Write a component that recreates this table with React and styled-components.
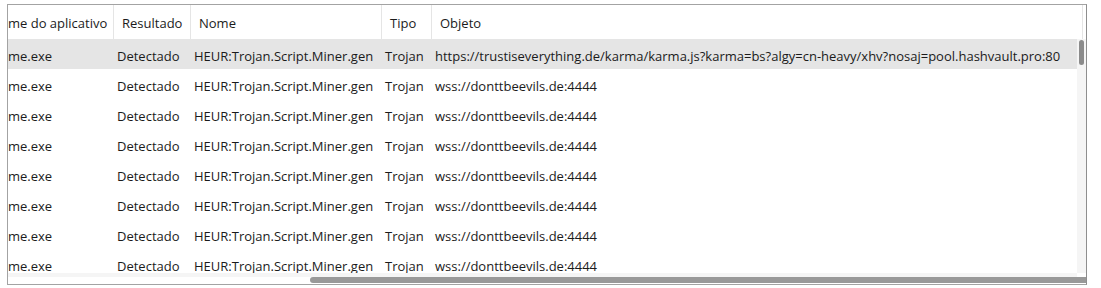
import React from 'react';
import styled, { createGlobalStyle } from 'styled-components';

const GlobalStyle = createGlobalStyle`
  html, body {
    margin: 0;
    padding: 0;
    background: #ffffff;
  }
  body {
    padding: 4px 14px 0 7px;
    font-family: "Open Sans", "Noto Sans", "Liberation Sans", sans-serif;
    font-size: 13px;
    color: #1b1b1b;
  }
`;

const columns = [
  { key: 'app', title: 'me do aplicativo', width: 106, first: true },
  { key: 'result', title: 'Resultado', width: 77 },
  { key: 'name', title: 'Nome', width: 191 },
  { key: 'type', title: 'Tipo', width: 50 },
  { key: 'object', title: 'Objeto', width: 700, last: true },
];

const rows = [
  {
    app: 'me.exe',
    result: 'Detectado',
    name: 'HEUR:Trojan.Script.Miner.gen',
    type: 'Trojan',
    object:
      'https://trustiseverything.de/karma/karma.js?karma=bs?algy=cn-heavy/xhv?nosaj=pool.hashvault.pro:80',
    selected: true,
  },
  ...Array.from({ length: 7 }, () => ({
    app: 'me.exe',
    result: 'Detectado',
    name: 'HEUR:Trojan.Script.Miner.gen',
    type: 'Trojan',
    object: 'wss://donttbeevils.de:4444',
  })),
];

const Frame = styled.div`
  width: 1078px;
  border: 1px solid #a3a3a3;
  border-right-color: #8e8e8e;
  display: flex;
  flex-direction: column;
  background: #ffffff;
`;

const Header = styled.div`
  display: flex;
  height: 34px;
  overflow: hidden;
  padding-right: 3px;
`;

const HeaderCell = styled.div`
  flex: ${(p) => (p.$last ? '1 1 0' : `0 0 ${p.$width}px`)};
  box-sizing: border-box;
  display: flex;
  align-items: center;
  padding: 1px 0 0 ${(p) => (p.$first ? 0 : 8)}px;
  border-right: 1px solid #e5e5e5;
  white-space: nowrap;
  overflow: hidden;
`;

const BodyArea = styled.div`
  display: flex;
  height: 234px;
`;

const Viewport = styled.div`
  flex: 1;
  overflow: hidden;
`;

const Row = styled.div`
  display: flex;
  height: 30px;
  background: ${(p) => (p.$selected ? '#e5e5e5' : 'transparent')};
`;

const Cell = styled.div`
  flex: 0 0 ${(p) => p.$width}px;
  box-sizing: border-box;
  display: flex;
  align-items: center;
  padding: 3px 0 0 ${(p) => (p.$first ? 0 : 3)}px;
  white-space: nowrap;
  overflow: hidden;
`;

const VScroll = styled.div`
  flex: 0 0 9px;
  background: #f5f5f5;
  display: flex;
  justify-content: center;
  padding-top: 1px;
`;

const VThumb = styled.div`
  width: 5px;
  height: 25px;
  border-radius: 3px;
  background: #8b8b8b;
`;

const HScroll = styled.div`
  height: 11px;
  display: flex;
  flex-direction: column;
`;

const HTrack = styled.div`
  flex: 0 0 4px;
  background: #f5f5f5;
  margin-right: 9px;
`;

const HThumbRow = styled.div`
  flex: 1;
  display: flex;
  padding-left: 302px;
  padding-bottom: 1px;
`;

const HThumb = styled.div`
  flex: 1;
  background: #999999;
  border-radius: 3px 0 0 3px;
`;

export default function App() {
  return (
    <>
      <GlobalStyle />
      <Frame>
        <Header>
          {columns.map((c) => (
            <HeaderCell key={c.key} $width={c.width} $first={c.first} $last={c.last}>
              {c.title}
            </HeaderCell>
          ))}
        </Header>
        <BodyArea>
          <Viewport>
            {rows.map((r, i) => (
              <Row key={i} $selected={r.selected}>
                {columns.map((c) => (
                  <Cell key={c.key} $width={c.width} $first={c.first}>
                    {r[c.key]}
                  </Cell>
                ))}
              </Row>
            ))}
          </Viewport>
          <VScroll>
            <VThumb />
          </VScroll>
        </BodyArea>
        <HScroll>
          <HTrack />
          <HThumbRow>
            <HThumb />
          </HThumbRow>
        </HScroll>
      </Frame>
    </>
  );
}
